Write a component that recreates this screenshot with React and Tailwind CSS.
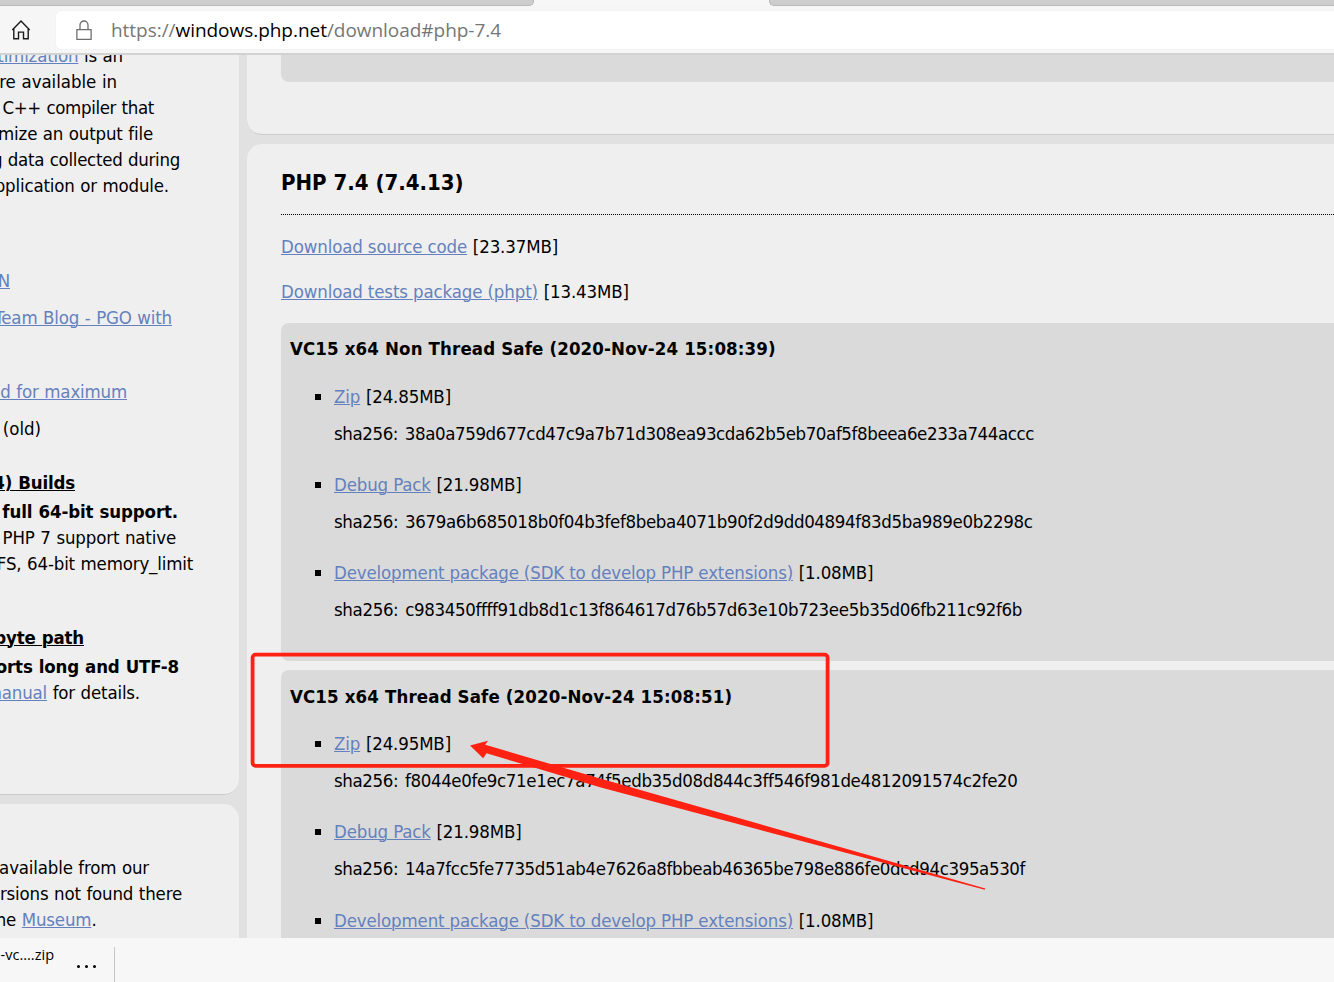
import React from "react";

function Link({ children }) {
  return <span className="text-[#6481bd] underline decoration-1 underline-offset-1">{children}</span>;
}

function SideLine({ width, children, className = "" }) {
  return (
    <div className={`flex h-[26px] shrink-0 justify-end whitespace-pre leading-[28px] ${className}`} style={{ width }}>
      <span>{children}</span>
    </div>
  );
}

function Build({ title, className, listClassName, items }) {
  return (
    <section className={`w-[1100px] shrink-0 rounded-lg bg-[#dadada] pl-[9px] ${className}`}>
      <h4 className="h-[26px] font-bold leading-[28px] tracking-[0.14px]">{title}</h4>
      <ul className={`flex flex-col gap-[25px] pl-[25px] ${listClassName}`}>
        {items.map((item) => (
          <li key={item.name} className={`flex gap-[13px] ${item.className || ""}`}>
            <span className="mt-[11px] size-1.5 shrink-0 bg-black" />
            <div className="flex flex-col gap-[11px] whitespace-nowrap leading-[28px]">
              <p className="h-[26px] tracking-[-0.15px]">
                <Link>{item.name}</Link>
                <span className="[word-spacing:0.6px]"> [{item.size}]</span>
              </p>
              {item.sha && <p className={`h-[26px] [word-spacing:1.8px] ${item.tracking}`}>sha256: {item.sha}</p>}
            </div>
          </li>
        ))}
      </ul>
    </section>
  );
}

const nts = [
  { name: "Zip", size: "24.85MB", tracking: "tracking-[-0.388px]", sha: "38a0a759d677cd47c9a7b71d308ea93cda62b5eb70af5f8beea6e233a744accc" },
  { name: "Debug Pack", size: "21.98MB", tracking: "tracking-[-0.352px]", sha: "3679a6b685018b0f04b3fef8beba4071b90f2d9dd04894f83d5ba989e0b2298c" },
  { name: "Development package (SDK to develop PHP extensions)", size: "1.08MB", tracking: "tracking-[-0.343px]", sha: "c983450ffff91db8d1c13f864617d76b57d63e10b723ee5b35d06fb211c92f6b" },
];

const ts = [
  { name: "Zip", size: "24.95MB", tracking: "tracking-[-0.363px]", sha: "f8044e0fe9c71e1ec7a74f5edb35d08d844c3ff546f981de4812091574c2fe20" },
  { name: "Debug Pack", size: "21.98MB", tracking: "tracking-[-0.373px]", sha: "14a7fcc5fe7735d51ab4e7626a8fbbeab46365be798e886fe0dcd94c395a530f" },
  { name: "Development package (SDK to develop PHP extensions)", size: "1.08MB", className: "mt-px" },
];

function Browser() {
  return (
    <header className="flex h-[55px] shrink-0 flex-col border-b-2 border-[#d2d2d2] bg-[#f7f7f7]">
      <div className="flex h-1.5 shrink-0 justify-between">
        <div className="w-[534px] rounded-br-[5px] border-b border-r border-[#b9b9b9] bg-[#cdcdcd]" />
        <div className="w-[565px] rounded-bl-[5px] border-b border-l border-[#b9b9b9] bg-[#cdcdcd]" />
      </div>
      <div className="flex flex-1 bg-[#f6f6f6] pb-1 pt-[5px]">
        <div className="flex w-14 shrink-0 items-center pl-[11px]">
          <svg width="20" height="22" viewBox="0 0 20 22" fill="none" stroke="#1b1b1b" strokeWidth="1.4">
            <path d="M1.3 11 10 1.9l8.7 9.1M2.8 9.6v10.2h4.7v-6.7h5v6.7h4.7V9.6" />
          </svg>
        </div>
        <div className="flex flex-1 items-center rounded-l-[5px] bg-white pl-5 shadow-[0_0_2px_rgba(0,0,0,0.06)]">
          <svg width="16" height="21" viewBox="0 0 16 21" fill="none" stroke="#6f6f6f" strokeWidth="1.3">
            <path d="M.9 9.7h14.2v9.7H.9zM4 9.7V5a4 4 0 0 1 8 0v4.7" />
          </svg>
          <p className="ml-[19px] whitespace-nowrap font-['Open_Sans',sans-serif] text-[19px] leading-[26px] tracking-[-0.04px] text-[#767676]">
            https://<span className="text-black">windows.php.net</span>/download#php-7.4
          </p>
        </div>
      </div>
    </header>
  );
}

function Sidebar() {
  return (
    <aside className="flex w-[239px] shrink-0 flex-col gap-[9px] overflow-hidden tracking-[-0.17px] [word-spacing:0.5px]">
      <section className="flex h-[740px] shrink-0 flex-col overflow-hidden rounded-br-[15px] border-b border-[#cbcbcb] bg-[#efefef]">
        <SideLine width={123} className="-mt-[13px]"><Link>timization</Link> is an</SideLine>
        <SideLine width={117} className="tracking-[-0.05px]">ure available in</SideLine>
        <SideLine width={154} className="tracking-[-0.34px]">C++ compiler that</SideLine>
        <SideLine width={153}>mize an output file</SideLine>
        <SideLine width={180} className="tracking-[-0.28px]">g data collected during</SideLine>
        <SideLine width={169}>pplication or module.</SideLine>
        <SideLine width={10} className="mt-[69px]"><Link>N</Link></SideLine>
        <SideLine width={172} className="mt-[11px]"><Link>Team Blog - PGO with</Link></SideLine>
        <SideLine width={127} className="mt-12"><Link>ld for maximum</Link></SideLine>
        <SideLine width={41} className="mt-[11px] tracking-[-0.03px]">(old)</SideLine>
        <SideLine width={75} className="mt-7 font-bold underline decoration-1 underline-offset-1">4) Builds</SideLine>
        <SideLine width={178} className="mt-[3px] font-bold tracking-[-0.13px]">full 64-bit support.</SideLine>
        <SideLine width={176} className="tracking-[-0.15px]">PHP 7 support native</SideLine>
        <SideLine width={193}>FS, 64-bit memory_limit</SideLine>
        <SideLine width={84} className="mt-12 font-bold underline decoration-1 underline-offset-1">byte path</SideLine>
        <SideLine width={179} className="mt-[3px] font-bold">orts long and UTF-8</SideLine>
        <SideLine width={140}><Link>manual</Link> for details.</SideLine>
      </section>
      <section className="flex-1 rounded-tr-[15px] bg-[#efefef] pt-[50px]">
        <SideLine width={149}>available from our</SideLine>
        <SideLine width={182}>rsions not found there</SideLine>
        <SideLine width={96.5}>he <Link>Museum</Link>.</SideLine>
      </section>
    </aside>
  );
}

function Downloads() {
  return (
    <main className="flex w-[1087px] shrink-0 flex-col gap-[9px] overflow-hidden">
      <section className="h-20 shrink-0 overflow-hidden rounded-bl-[15px] border-b border-[#cbcbcb] bg-[#efefef] pl-[34px]">
        <div className="h-[27px] rounded-bl-lg bg-[#dadada]" />
      </section>
      <section className="flex flex-1 flex-col overflow-hidden rounded-tl-[15px] bg-[#efefef] pl-[34px] pt-[22px]">
        <h3 className="h-8 shrink-0 text-[22px] font-bold leading-[34px]">PHP 7.4 (7.4.13)</h3>
        <div className="mt-4 shrink-0 border-t border-dotted border-black" />
        <p className="mt-[18px] h-[26px] shrink-0 leading-[28px] tracking-[-0.13px]"><Link>Download source code</Link><span className="[word-spacing:0.6px]"> [23.37MB]</span></p>
        <p className="mt-[19px] h-[26px] shrink-0 leading-[28px] tracking-[-0.13px]"><Link>Download tests package (phpt)</Link><span className="[word-spacing:0.6px]"> [13.43MB]</span></p>
        <Build title="VC15 x64 Non Thread Safe (2020-Nov-24 15:08:39)" className="mt-[19px] h-[338px] pt-3" listClassName="mt-[22px]" items={nts} />
        <Build title="VC15 x64 Thread Safe (2020-Nov-24 15:08:51)" className="mt-[9px] h-[338px] pt-[13px]" listClassName="mt-[21px]" items={ts} />
      </section>
    </main>
  );
}

export default function App() {
  return (
    <div className="relative flex h-[982px] w-[1334px] flex-col overflow-hidden bg-[#e1e1e1] font-['DejaVu_Sans_Condensed','DejaVu_Sans',sans-serif] text-[18.5px] text-black">
      <Browser />
      <div className="flex h-[883px] shrink-0 gap-2 overflow-hidden">
        <Sidebar />
        <Downloads />
      </div>
      <footer className="flex flex-1 bg-[#f7f7f7] font-['Open_Sans',sans-serif]">
        <p className="mt-[7px] w-[54px] whitespace-nowrap text-right text-[14.5px] leading-5">-vc....zip</p>
        <div className="ml-[23px] mt-[27px] flex h-[3px] w-[19px] justify-between">
          <span className="size-[3px] rounded-full bg-black" />
          <span className="size-[3px] rounded-full bg-black" />
          <span className="size-[3px] rounded-full bg-black" />
        </div>
        <div className="ml-[18px] mt-[9px] w-px bg-[#c6c6c6]" />
      </footer>
      <svg className="absolute left-[240px] top-[640px]" width="760" height="260" viewBox="240 640 760 260">
        <rect x="252.6" y="654.6" width="575" height="111.2" rx="3" fill="none" stroke="#ff2112" strokeWidth="3.8" />
        <path d="M470 745.6 488 740.8 485.2 744.8 600 778.5 985.3 888.6 984.8 889.8 600 787.3 486.5 753.2 483.2 758.2Z" fill="#ff2112" />
      </svg>
    </div>
  );
}
